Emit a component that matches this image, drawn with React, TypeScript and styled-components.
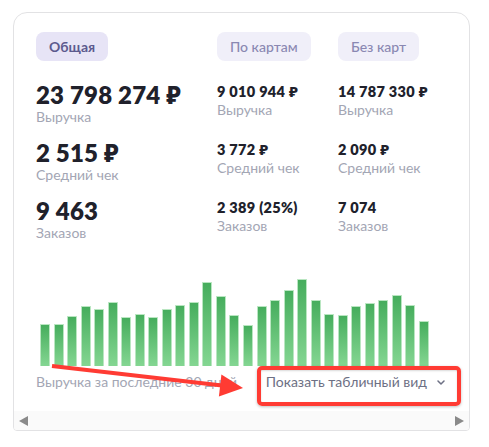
import styled, { createGlobalStyle } from "styled-components";

const GlobalStyle = createGlobalStyle`
  * { box-sizing: border-box; }
  body {
    margin: 0;
    background: #ffffff;
    font-family: "Lato", "Noto Sans", sans-serif;
  }
`;

interface Stat {
  value: string;
  label: string;
}

const columns: { tab: string; active?: boolean; stats: Stat[] }[] = [
  {
    tab: "Общая",
    active: true,
    stats: [
      { value: "23 798 274 ₽", label: "Выручка" },
      { value: "2 515 ₽", label: "Средний чек" },
      { value: "9 463", label: "Заказов" },
    ],
  },
  {
    tab: "По картам",
    stats: [
      { value: "9 010 944 ₽", label: "Выручка" },
      { value: "3 772 ₽", label: "Средний чек" },
      { value: "2 389 (25%)", label: "Заказов" },
    ],
  },
  {
    tab: "Без карт",
    stats: [
      { value: "14 787 330 ₽", label: "Выручка" },
      { value: "2 090 ₽", label: "Средний чек" },
      { value: "7 074", label: "Заказов" },
    ],
  },
];

const bars = [
  42, 42, 50, 60, 57, 64, 49, 52, 49, 57, 61, 64, 84, 70, 51, 41, 60, 66, 76,
  87, 66, 52, 51, 60, 63, 66, 71, 61, 45,
];

export default function App() {
  return (
    <>
      <GlobalStyle />
      <Page>
        <Card>
          <Content>
            <Grid>
              {columns.map((col, ci) => (
                <Column key={col.tab}>
                  <Tab $active={col.active}>{col.tab}</Tab>
                  {col.stats.map((s) => (
                    <StatCell key={s.label}>
                      <Value $big={ci === 0}>{s.value}</Value>
                      <Label>{s.label}</Label>
                    </StatCell>
                  ))}
                </Column>
              ))}
            </Grid>
            <Chart>
              {bars.map((h, i) => (
                <Bar key={i} $h={h} />
              ))}
            </Chart>
            <Footer>
              <Caption>Выручка за последние 30 дней</Caption>
              <Toggle>
                Показать табличный вид
                <Chevron viewBox="0 0 8 5">
                  <path d="M1 1l3 3 3-3" />
                </Chevron>
              </Toggle>
            </Footer>
          </Content>
          <Scrollbar>
            <ArrowLeft />
            <ArrowRight />
          </Scrollbar>
        </Card>

        <Highlight />
        <Pointer viewBox="0 0 489 447">
          <line x1="52" y1="366" x2="222" y2="385.6" />
          <polygon points="243,388 218.9,396.6 221.4,374.4" />
        </Pointer>
      </Page>
    </>
  );
}

const Page = styled.div`
  position: relative;
  width: 489px;
  height: 447px;
  padding: 12px 0 0 13px;
`;

const Card = styled.div`
  width: 457px;
  height: 419px;
  border: 1px solid #e2e2e4;
  border-radius: 14px 14px 4px 4px;
  overflow: hidden;
  display: flex;
  flex-direction: column;
  background: #ffffff;
`;

const Content = styled.div`
  flex: 1;
  padding: 19px 22px 0 22px;
  display: flex;
  flex-direction: column;
`;

const Grid = styled.div`
  display: grid;
  grid-template-columns: 181px 121px 1fr;
`;

const Column = styled.div`
  display: flex;
  flex-direction: column;
  align-items: flex-start;
`;

const Tab = styled.div<{ $active?: boolean }>`
  height: 29px;
  padding: 0 13px;
  border-radius: 8px;
  display: flex;
  align-items: center;
  font-size: 14px;
  font-weight: ${(p) => (p.$active ? 700 : 500)};
  color: ${(p) => (p.$active ? "#5c5a8e" : "#8a88b2")};
  background: ${(p) => (p.$active ? "#e7e4f6" : "#f0eff9")};
  margin-bottom: 21px;
`;

const StatCell = styled.div`
  height: 58px;
  display: flex;
  flex-direction: column;
`;

const Value = styled.div<{ $big?: boolean }>`
  font-size: ${(p) => (p.$big ? "24px" : "14.5px")};
  line-height: ${(p) => (p.$big ? "26px" : "18px")};
  margin-top: ${(p) => (p.$big ? "0" : "1px")};
  letter-spacing: ${(p) => (p.$big ? "0.2px" : "0.3px")};
  font-weight: 800;
  color: #20212b;
  white-space: nowrap;
`;

const Label = styled.div`
  font-size: 14px;
  line-height: 18px;
  color: #a3a6b4;
  white-space: nowrap;
`;

const Chart = styled.div`
  height: 100px;
  margin: 10px 0 0 4px;
  display: flex;
  align-items: flex-end;
  gap: 3.54px;
`;

const Bar = styled.div<{ $h: number }>`
  width: 10px;
  height: ${(p) => p.$h}px;
  background: linear-gradient(180deg, #46ad5d 0%, #84d692 100%);
  border: 1px solid #b9e6c1;
  border-bottom: none;
  border-radius: 1px 1px 0 0;
`;

const Footer = styled.div`
  margin-top: 7px;
  display: flex;
  align-items: center;
  justify-content: space-between;
  padding-right: 2px;
`;

const Caption = styled.div`
  font-size: 14px;
  line-height: 18px;
  color: #a3a6b4;
`;

const Toggle = styled.div`
  display: flex;
  align-items: center;
  gap: 10px;
  font-size: 14px;
  line-height: 18px;
  color: #6d7084;
  background: #ffffff;
  padding-left: 8px;
`;

const Chevron = styled.svg`
  width: 8px;
  height: 5px;
  fill: none;
  stroke: #6d7084;
  stroke-width: 1.5;
  stroke-linecap: round;
  stroke-linejoin: round;
`;

const Scrollbar = styled.div`
  height: 19px;
  background: #fafafa;
  display: flex;
  align-items: center;
  justify-content: space-between;
  padding: 0 5px;
`;

const ArrowLeft = styled.div`
  width: 0;
  height: 0;
  border-top: 5.5px solid transparent;
  border-bottom: 5.5px solid transparent;
  border-right: 9px solid #8a8a8a;
`;

const ArrowRight = styled.div`
  width: 0;
  height: 0;
  border-top: 5.5px solid transparent;
  border-bottom: 5.5px solid transparent;
  border-left: 9px solid #8a8a8a;
`;

const Highlight = styled.div`
  position: absolute;
  left: 257px;
  top: 366px;
  width: 204px;
  height: 40px;
  border: 4px solid #ff3b33;
  border-radius: 5px;
  box-shadow: 0 1px 3px rgba(0, 0, 0, 0.25), inset 0 1px 2px rgba(0, 0, 0, 0.15);
  pointer-events: none;
`;

const Pointer = styled.svg`
  position: absolute;
  left: 0;
  top: 0;
  width: 489px;
  height: 447px;
  pointer-events: none;
  line {
    stroke: #ff3b33;
    stroke-width: 4;
  }
  polygon {
    fill: #ff3b33;
  }
`;
